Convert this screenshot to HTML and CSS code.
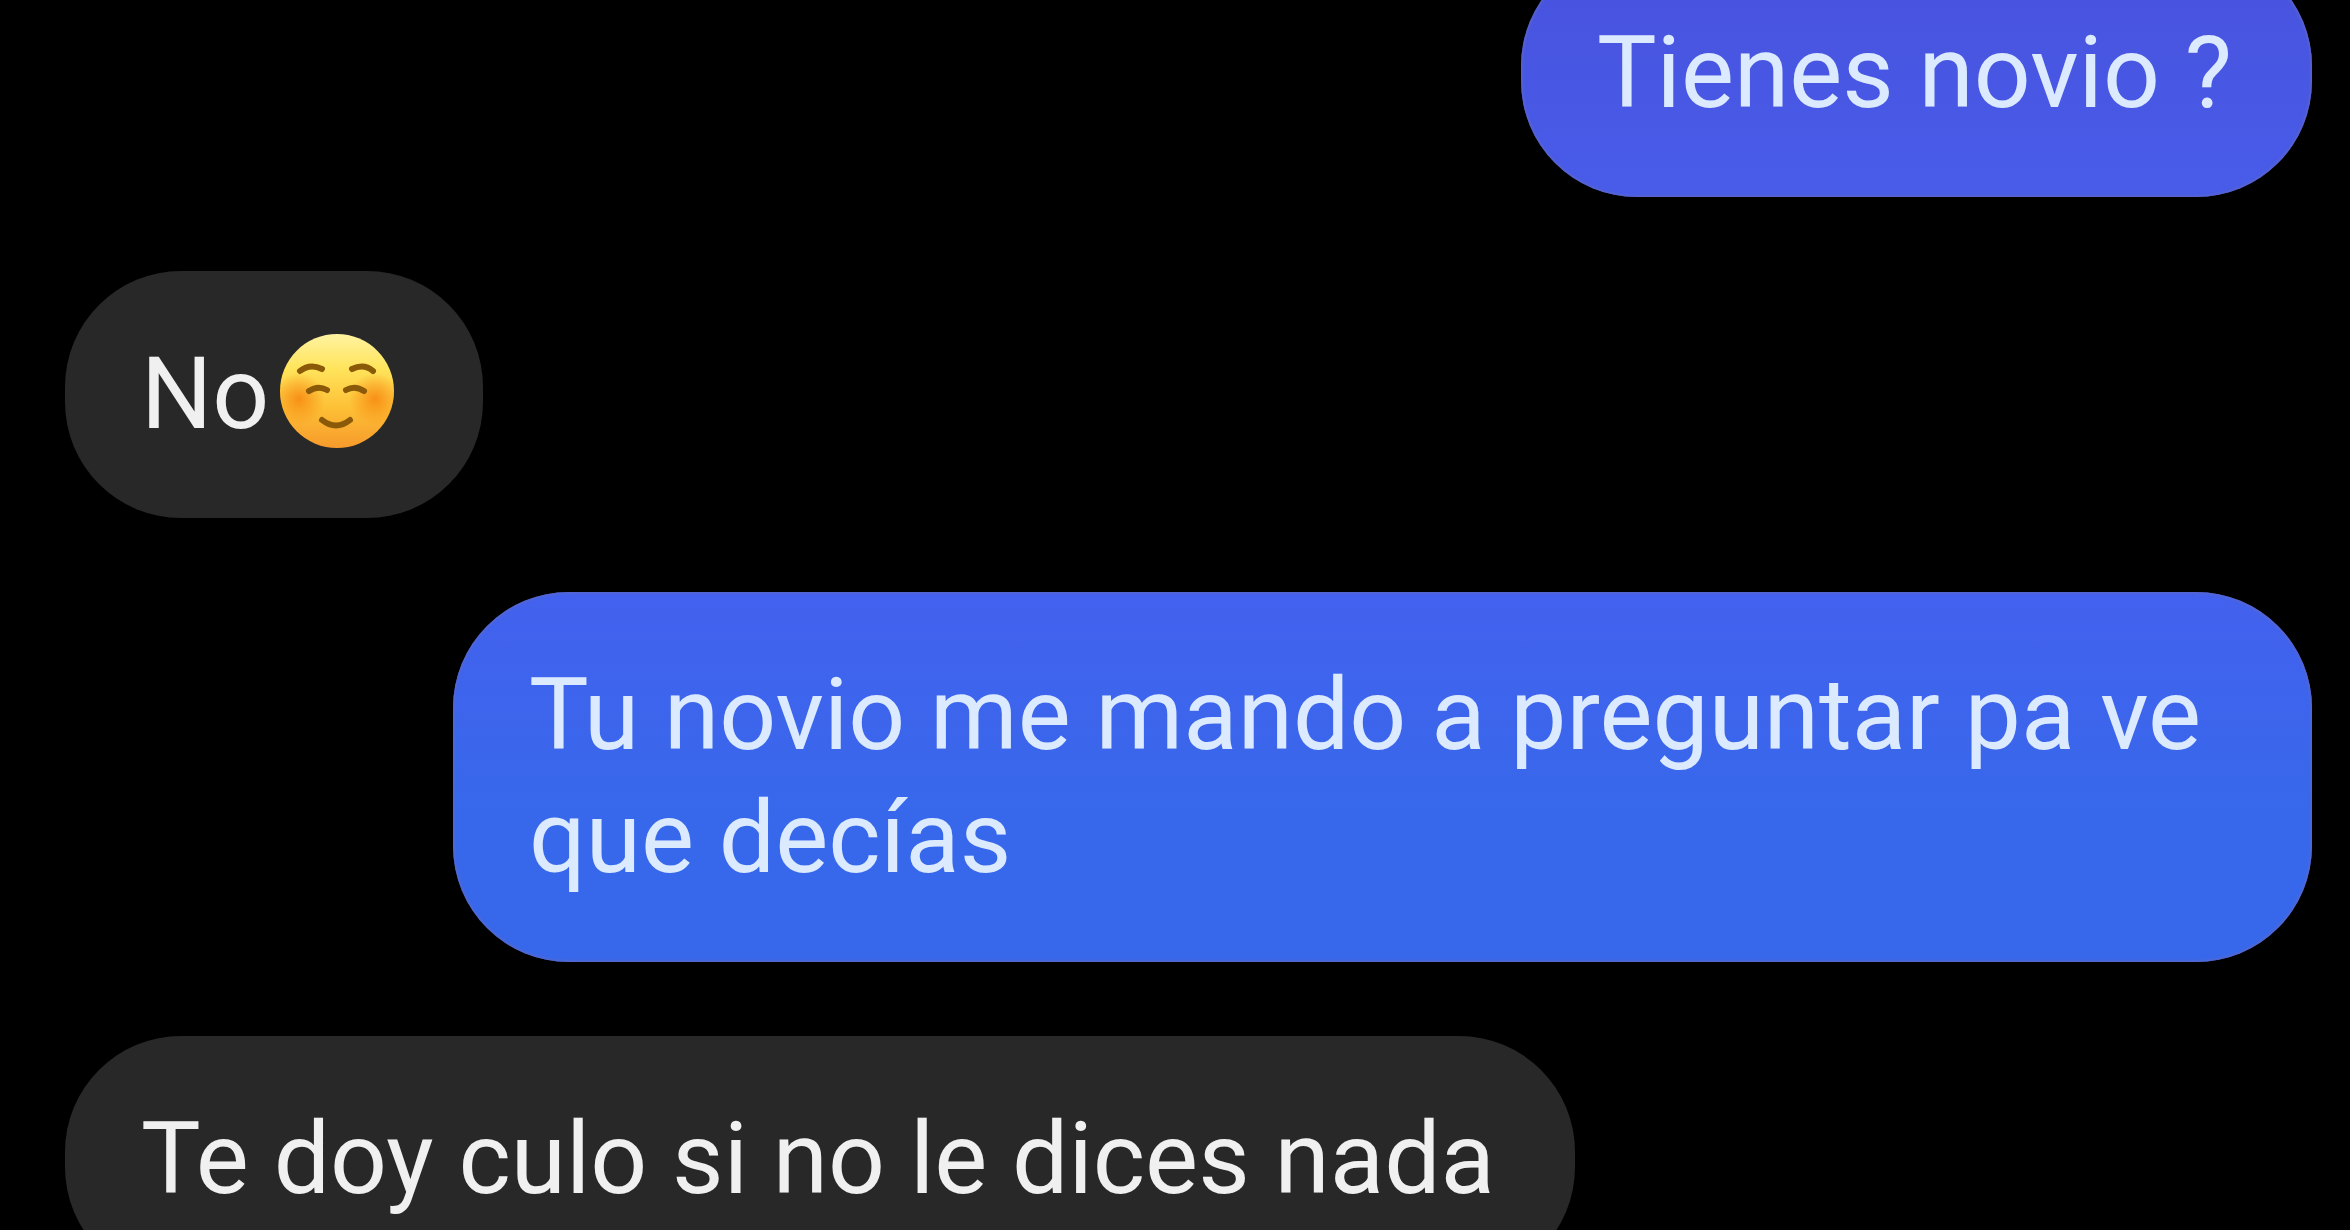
FILE: index.html
```html
<!DOCTYPE html>
<html lang="es">

<head>
    <meta charset="UTF-8">
    <meta name="viewport" content="width=device-width, initial-scale=1.0">
    <title>Chat</title>
    <link rel="stylesheet" href="styles.css">
</head>

<body>
    <main class="chat">
        <div class="message sent first">Tienes novio ?</div>
        <div class="message received">No<svg class="emoji" viewBox="0 0 116 116" role="img" aria-label="☺️">
                <defs>
                    <linearGradient id="face" x1="0" y1="0" x2="0" y2="1">
                        <stop offset="0" stop-color="#fff3a0" />
                        <stop offset="0.3" stop-color="#ffe45c" />
                        <stop offset="0.65" stop-color="#fdc035" />
                        <stop offset="1" stop-color="#f79a2c" />
                    </linearGradient>
                    <radialGradient id="cheek">
                        <stop offset="0" stop-color="#f78a12" stop-opacity="0.9" />
                        <stop offset="1" stop-color="#f78a12" stop-opacity="0" />
                    </radialGradient>
                    <clipPath id="round">
                        <circle cx="58" cy="58" r="57" />
                    </clipPath>
                </defs>
                <circle cx="58" cy="58" r="57" fill="url(#face)" />
                <g clip-path="url(#round)">
                    <circle cx="20" cy="66" r="26" fill="url(#cheek)" />
                    <circle cx="96" cy="66" r="26" fill="url(#cheek)" />
                </g>
                <g fill="none" stroke="#8a5a08" stroke-width="6" stroke-linecap="round">
                    <path d="M21 38Q31 30 43 36" />
                    <path d="M73 36Q85 30 94 38" />
                    <path d="M30 58Q39 52 48 57" />
                    <path d="M67 57Q76 52 85 58" />
                    <path d="M43 87Q57 98 71 87" />
                </g>
            </svg></div>
        <div class="message sent">Tu novio me mando a preguntar pa ve que decías</div>
        <div class="message received">Te doy culo si no le dices nada</div>
    </main>
</body>

</html>
```
FILE: styles.css
```css
* {
    box-sizing: border-box;
}

body {
    margin: 0;
    background-color: #000;
    font-family: Roboto, "Liberation Sans", sans-serif;
    overflow: hidden;
}

.chat {
    display: flex;
    flex-direction: column;
    align-items: flex-start;
    gap: 74px;
    padding: 0 38px 0 65px;
}

.message {
    max-width: calc(100% - 388px);
    padding: 61px 80px 63px 76px;
    border-radius: 116px;
    font-size: 100px;
    line-height: 123px;
}

/* the conversation is scrolled, so this one is cut at the top */
.first {
    margin-top: -50px;
}

.sent {
    align-self: flex-end;
    background: linear-gradient(#4361ee, #3768eb 60%);
    color: #dceaff;
    box-shadow: inset 0 0 3px 1px #5f68c4;
}

.sent.first {
    background: linear-gradient(#4852dc, #485cea);
}

.received {
    background-color: #282828;
    color: #f0f0f0;
}

.emoji {
    width: 116px;
    height: 116px;
    margin: 0 8px 0 10px;
    vertical-align: -21px;
}
```
